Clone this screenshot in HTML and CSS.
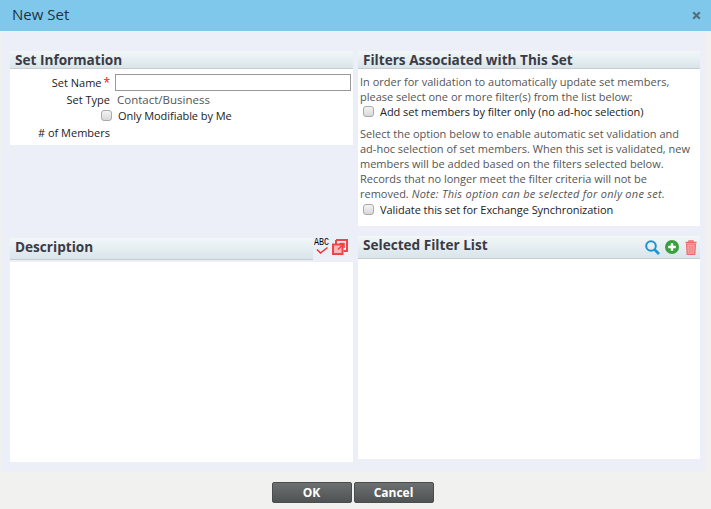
FILE: index.html
```html
<!DOCTYPE html>
<html lang="en">
<head>
<meta charset="utf-8">
<title>New Set</title>
<link rel="stylesheet" href="styles.css">
</head>
<body>
<div class="dialog">
  <header class="titlebar">
    <span class="title">New Set</span>
    <svg class="close" width="9" height="9" viewBox="0 0 9 9"><path d="M1.2 1.2 7.8 7.8M7.8 1.2 1.2 7.8" stroke="#51707f" stroke-width="2.2"/></svg>
  </header>
  <main class="content">
    <div class="col col-left">
      <section class="panel info">
        <h2 class="panel-head">Set Information</h2>
        <div class="form">
          <div class="lbl name-lbl">Set Name <span class="req">*</span></div>
          <div class="input"></div>
          <div class="lbl">Set Type</div>
          <div class="val">Contact/Business</div>
          <div class="box-cell"><span class="check"></span></div>
          <div class="opt">Only Modifiable by Me</div>
          <div class="lbl">#&nbsp;of Members</div>
          <div></div>
        </div>
      </section>
      <section class="desc">
        <div class="desc-head">
          <h2 class="panel-head grow">Description</h2>
          <div class="desc-tools">
            <svg class="spell" width="18" height="18" viewBox="0 0 18 18"><text x="0" y="9" class="abc" textLength="15" lengthAdjust="spacingAndGlyphs">ABC</text><path d="M3 13.5 6.5 17 13.5 11.5" fill="none" stroke="#ef3030" stroke-width="1.5"/></svg>
            <svg class="expand" width="16" height="16" viewBox="0 0 16 16"><path d="M4 1H15V12H11.5M4 1V5" fill="none" stroke="#f04449" stroke-width="2"/><path d="M1 5.5H10.5V15H1Z" fill="#f9b9bb" stroke="#f04449" stroke-width="2"/><path d="M6 10.5 11.5 5M7.5 4.5H12V9" fill="none" stroke="#f04449" stroke-width="1.6"/></svg>
          </div>
        </div>
        <div class="blank desc-body"></div>
      </section>
    </div>
    <div class="col col-right">
      <section class="panel filters">
        <h2 class="panel-head">Filters Associated with This Set</h2>
        <div class="filters-body">
          <p class="txt">In order for validation to automatically update set members, please select one or more filter(s) from the list below:</p>
          <div class="row first-row"><span class="check"></span><span class="opt">Add set members by filter only (no ad-hoc selection)</span></div>
          <p class="txt second">Select the option below to enable automatic set validation and ad-hoc selection of set members. When this set is validated, new members will be added based on the filters selected below. Records that no longer meet the filter criteria will not be removed. <em class="note">Note: This option can be selected for only one set.</em></p>
          <div class="row"><span class="check"></span><span class="opt">Validate this set for Exchange Synchronization</span></div>
        </div>
      </section>
      <section class="list">
        <div class="panel-head list-head">
          <h2 class="list-title">Selected Filter List</h2>
          <div class="list-tools">
            <svg width="15" height="15" viewBox="0 0 15 15"><circle cx="6" cy="6" r="4.8" fill="none" stroke="#1b94d2" stroke-width="2"/><path d="M9.5 9.5 14 14" stroke="#1b94d2" stroke-width="2.6"/></svg>
            <svg width="14" height="14" viewBox="0 0 14 14"><circle cx="7" cy="7" r="7" fill="#3a9f3e"/><path d="M7 3.2V10.8M3.2 7H10.8" stroke="#fff" stroke-width="2.4"/></svg>
            <svg class="trash" width="12" height="15" viewBox="0 0 12 15"><path d="M4 2V.8H8V2M.5 2.5H11.5" fill="none" stroke="#f0686a" stroke-width="1.3"/><path d="M1.6 4H10.4L9.8 14.4H2.2Z" fill="#f7a5a5" stroke="#f0686a" stroke-width="1.2"/><path d="M4.3 5.5V13M6 5.5V13M7.7 5.5V13" stroke="#f0686a" stroke-width=".6"/></svg>
          </div>
        </div>
        <div class="blank list-body"></div>
      </section>
    </div>
  </main>
  <footer class="footer">
    <button class="btn ok" type="button">OK</button>
    <button class="btn" type="button">Cancel</button>
  </footer>
</div>
</body>
</html>
```
FILE: styles.css
```css
* { box-sizing: border-box; }
html, body { margin: 0; height: 100%; }
body {
  width: 711px;
  height: 509px;
  overflow: hidden;
  font-family: "Open Sans", "Liberation Sans", sans-serif;
  font-size: 11px;
  color: #222;
  background: #f1f1f0;
}
.dialog { display: flex; flex-direction: column; height: 509px; }
.titlebar {
  height: 31px;
  flex: none;
  background: #7fc8ec;
  display: flex;
  align-items: center;
  justify-content: space-between;
  padding: 0 10px 1px 12px;
}
.title { font-size: 15px; line-height: 20px; margin-top: -2px; color: #1f3240; }
.content {
  height: 441px;
  flex: none;
  margin: 0 5px 0 2px;
  background: #eceff7;
  padding: 20px 6px 0 8px;
  display: grid;
  grid-template-columns: 343px 342px;
  column-gap: 5px;
}
.col { display: flex; flex-direction: column; }
.panel-head {
  margin: 0;
  height: 18px;
  padding-left: 5px;
  font-size: 13.6px;
  line-height: 18px;
  font-weight: 700;
  color: #3b3b46;
  background: linear-gradient(#f2f7f8, #d9e5ea);
  border-bottom: 1px solid #c6ccd0;
}
.panel { background: #fff; }
.info { height: 94px; }
.form {
  display: grid;
  grid-template-columns: 100px 1fr;
  grid-template-rows: 18px 17px 15px 18px;
  column-gap: 5px;
  padding: 4px 2px 0 0;
  align-items: center;
}
.lbl { text-align: right; color: #222; white-space: nowrap; }
.req { color: #f01010; font-size: 12px; line-height: 10px; margin-left: -1px; }
.input {
  height: 17px;
  width: 236px;
  border: 1px solid #999;
  background: #fff;
}
.val { color: #555; padding-left: 2px; font-size: 11.5px; }
.box-cell { display: flex; justify-content: flex-end; margin-right: -2px; }
.opt { color: #222; white-space: nowrap; padding-left: 3px; letter-spacing: -.05px; }
.check {
  display: block;
  width: 11px;
  height: 11px;
  flex: none;
  border: 1px solid #aaa;
  border-radius: 3px;
  background: linear-gradient(#f4f4f4, #d8d8d8);
}
.desc { margin-top: 93px; display: flex; flex-direction: column; }
.desc-head { display: flex; height: 22px; }
.grow { width: 303px; height: 22px; line-height: 18px; flex: none; }
.desc-tools { display: flex; padding-left: 1px; }
.spell { margin-top: -2px; }
.expand { margin-top: 1px; }
.abc { font-family: "Liberation Mono", monospace; font-size: 10px; fill: #000; }
.blank { background: #fff; }
.desc-body { height: 200px; margin-top: 2px; }
.filters { height: 175px; }
.filters-body { padding: 5px 2px 0; }
.txt { margin: 0; color: #555; line-height: 15px; }
.note { letter-spacing: .27px; }
.first-row { margin-top: -1px; }
.second { margin-top: 6px; }
.row { display: flex; align-items: center; height: 17px; padding-left: 3px; gap: 3px; }
.list { margin-top: 10px; display: flex; flex-direction: column; }
.list-head {
  display: flex;
  justify-content: space-between;
  align-items: center;
  height: 23px;
  padding-right: 3px;
}
.list-title { margin: 0 0 4px; font-size: 13.6px; font-weight: 700; }
.list-tools { display: flex; align-items: center; gap: 5px; }
.trash { margin-left: 1px; }
.list-body { height: 200px; }
.footer {
  flex: 1;
  display: flex;
  justify-content: center;
  align-items: flex-start;
  gap: 2px;
  padding: 10px 6px 0 0;
}
.btn {
  width: 80px;
  height: 21px;
  padding: 0;
  border: 1px solid #4a4d4d;
  border-radius: 2px;
  background: linear-gradient(#6c7070, #505353);
  color: #fff;
  font-family: inherit;
  font-size: 12px;
  font-weight: 700;
  line-height: 18px;
}
```
